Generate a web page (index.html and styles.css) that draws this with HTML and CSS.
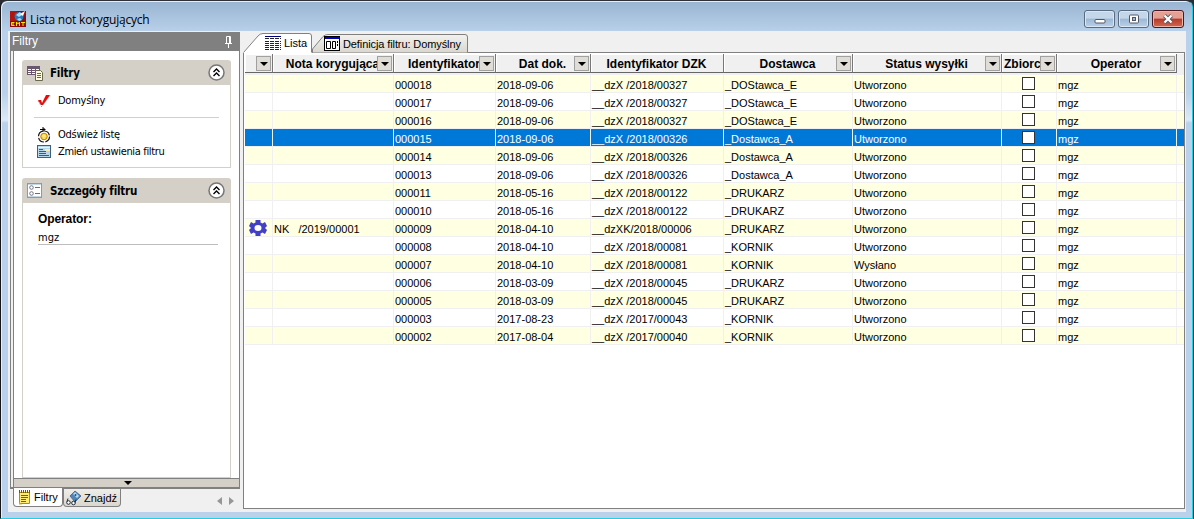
FILE: index.html
```html
<!DOCTYPE html>
<html lang="pl">
<head>
  <meta charset="UTF-8">
  <meta name="viewport" content="width=device-width, initial-scale=1.0">
  <title>Lista not korygujących</title>
  <link rel="stylesheet" href="styles.css">
</head>

<body>
  <div class="window">
    <div class="titlebar">
      <svg class="app-icon" width="16" height="16" viewBox="0 0 16 16">
        <rect width="16" height="16" fill="#8e0d0b"/>
        <path d="M0 0h7L4 6l3 4H0z" fill="#b01510"/>
        <circle cx="9" cy="5.500" r="4.500" fill="#2a7ac0"/>
        <path d="M6 4l4-3 2 3-3 2zM7 8l3-1 2 2-3 1z" fill="#a8dcf0"/>
        <path d="M10 3l5-3-2 5z" fill="#fff"/>
        <path d="M4.500 11.500h-3v3h3M2 13h2M6.500 15v-4l1 1.500h1l1-1.500v4M11 11.500h4M13 11.500v3.500" fill="none" stroke="#ffe800"/>
      </svg>
      <h1>Lista not korygujących</h1>
      <div class="window-buttons">
        <button class="win-btn" aria-label="Minimalizuj">
          <svg width="12" height="12"><rect x="1" y="6.500" width="10" height="3.500" rx="1" fill="#fff" stroke="#535666"/></svg>
        </button>
        <button class="win-btn" aria-label="Maksymalizuj">
          <svg width="12" height="12"><rect x="1.500" y="2" width="9" height="8" rx="1" fill="#fff" stroke="#535666"/><rect x="4.500" y="4.500" width="3" height="3" fill="#9db8d6" stroke="#535666"/></svg>
        </button>
        <button class="win-btn close" aria-label="Zamknij">
          <svg width="12" height="12"><path d="M2.500 2.500l7 7M9.500 2.500l-7 7" stroke="#535666" stroke-width="4"/><path d="M2.500 2.500l7 7M9.500 2.500l-7 7" stroke="#fff" stroke-width="2.300"/></svg>
        </button>
      </div>
    </div>

    <div class="client">
      <!-- Filter panel -->
      <aside class="sidebar">
        <div class="sidebar-header">
          <span>Filtry</span>
          <svg width="9" height="12"><path d="M2.500 7V.5h4V7M5.500 1v6M1 7.500h7M4.500 8v4" fill="none" stroke="#fff"/></svg>
        </div>
        <div class="sidebar-body">
          <div class="groups">
            <section class="group">
              <div class="group-header">
                <svg width="16" height="16"><path d="M0 1h13v9H0z" fill="#6b5670"/><path d="M1 4h3v1H1zM5 4h3v1H5zM9 4h3v1H9zM1 6h3v1H1zM5 6h3v1H5zM1 8h3v1H1zM5 8h3v1H5z" fill="#fff"/><path d="M8.500 5.500h5l2 2v8h-7z" fill="#fffbe0" stroke="#68684c"/><path d="M10 8.500h4M10 10.500h4M10 12.500h4" stroke="#68684c"/></svg>
                <h2>Filtry</h2>
                <svg class="chevron" width="17" height="17"><circle cx="8.500" cy="8.500" r="7.500" fill="#fff" stroke="#777" stroke-width="1.500"/><path d="M5.500 8l3-3 3 3M5.500 12l3-3 3 3" fill="none" stroke="#000" stroke-width="1.400"/></svg>
              </div>
              <div class="group-body links">
                <a class="link"><svg width="14" height="14"><path d="M1 6h3l1 3 4-8h4L6 11H4z" fill="#f00808"/><path d="M1 7l3.500 5.500L13 1.500" fill="none" stroke="#666" stroke-width=".8" stroke-dasharray="1 1"/></svg>Domyślny</a>
                <hr>
                <a class="link"><svg width="14" height="16"><circle cx="7" cy="9.500" r="5.500" fill="#fff" stroke="#111" stroke-width="1.200" stroke-dasharray="7 1.500"/><circle cx="7" cy="9.500" r="3.300" fill="#f8cf35" stroke="#c48200"/><path d="M7 7v5M5 9h4" stroke="#fff4a0"/><path d="M3 2.500h5M6 0v5M7 1v3M8 2v1" fill="none" stroke="#000"/></svg>Odśwież listę</a>
                <a class="link"><svg width="14" height="13"><rect x=".5" y=".5" width="13" height="12" fill="#b9d7ea" stroke="#3b5f86"/><path d="M1 2h12v1H1z" fill="#fff3c0"/><path d="M2 4.500h4M2 6.500h7M2 8.500h7M2 10.500h10" stroke="#27628f"/><path d="M8 4h5v2H8z" fill="#ffecac"/></svg><span class="tight">Zmień ustawienia filtru</span></a>
              </div>
            </section>

            <section class="group details">
              <div class="group-header">
                <svg width="16" height="16"><rect x=".5" y=".5" width="14" height="14" fill="#fff" stroke="#7f9cb8"/><path d="M1 1h13v1H1zM1 13h13v1H1z" fill="#c4d6e4"/><circle cx="4.500" cy="4.500" r="1.800" fill="#fff" stroke="#71738a"/><circle cx="4.500" cy="10.500" r="1.800" fill="#fff" stroke="#71738a"/><path d="M8 4.500h5M8 10.500h5" stroke="#4e7394"/></svg>
                <h2>Szczegóły filtru</h2>
                <svg class="chevron" width="17" height="17"><circle cx="8.500" cy="8.500" r="7.500" fill="#fff" stroke="#777" stroke-width="1.500"/><path d="M5.500 8l3-3 3 3M5.500 12l3-3 3 3" fill="none" stroke="#000" stroke-width="1.400"/></svg>
              </div>
              <div class="group-body fields">
                <h3>Operator:</h3>
                <p>mgz</p>
              </div>
            </section>
          </div>
          <div class="scroll-down"><svg width="8" height="4"><path d="M0 0h8L4 4z"/></svg></div>
        </div>
        <div class="sidebar-tabs">
          <span class="side-tab active"><svg width="13" height="16"><path d="M1.500 3.500h10v11h-10z" fill="#ffec70" stroke="#a88a22"/><path d="M1 13l3 2.500H1z" fill="#d6ad18"/><path d="M3 6.500h7M3 8.500h7M3 10.500h5M3 12.500h5" stroke="#696230"/><path d="M1.500 1v3M3.500 1v3M5.500 1v3M7.500 1v3M9.500 1v3M11.500 1v3" stroke="#555"/></svg>Filtry</span>
          <span class="side-tab"><svg width="16" height="16"><path d="M4 6l5-5 6 5-6 6z" fill="#4c86bd" stroke="#42617e" stroke-width=".8"/><path d="M7 4l2-2 4 4-2 2z" fill="#b8d8ee"/><circle cx="9.500" cy="5" r="1" fill="#155087"/><circle cx="2.500" cy="12.500" r="1.800" fill="#fff" stroke="#222b38"/><circle cx="7.500" cy="13" r="1.800" fill="#fff" stroke="#222b38"/><path d="M1 11.500l1-3M9 12.500l1-3" stroke="#222b38"/></svg>Znajdź</span>
          <span class="tab-arrows">
            <svg width="5" height="8"><path d="M5 0v8L0 4z"/></svg>
            <svg width="5" height="8"><path d="M0 0v8l5-4z"/></svg>
          </span>
        </div>
      </aside>

      <!-- Document list -->
      <main class="main">
        <div class="tabs">
          <div class="tab tab-list">
            <svg class="tab-shape" width="70" height="20"><path d="M0 20V19L15 3q2-2.500 5-2.500h46q2.500 0 2.500 2.500v17z" fill="#fff"/><path d="M.5 19.500 15 3q2-2.500 5-2.500h46q2.500 0 2.500 2.500v16" fill="none" stroke="#808080"/></svg>
            <svg width="16" height="14"><path d="M0 .5h16" stroke="#00007c"/><path d="M0 2.500h16M0 5.500h16M0 7.500h16M0 9.500h16M0 11.500h16M0 13.500h16" stroke="#222" stroke-dasharray="4 1"/></svg>
            <span>Lista</span>
          </div>
          <div class="tab tab-filter">
            <svg class="tab-shape" width="157" height="19"><defs><linearGradient id="tabFill" x1="0" y1="0" x2="0" y2="1"><stop offset="0" stop-color="#f3f2ef"/><stop offset="1" stop-color="#dad7cf"/></linearGradient></defs><path d="M.5 18.500V15L11 2.500Q13 .5 16 .5h137q2.500 0 2.500 2.500v15.500" fill="url(#tabFill)" stroke="#808080"/></svg>
            <svg width="16" height="15"><rect x=".5" y=".5" width="15" height="14" fill="#fff" stroke="#000"/><path d="M1 1h14v2H1z" fill="#0000c8"/><path d="M2.500 5.500h4v7h-4zM8.500 5.500h3v7h-3zM13.500 5v2M13.500 8v2" fill="none" stroke="#000"/></svg>
            <span>Definicja filtru: Domyślny</span>
          </div>
        </div>

        <div class="grid">
          <table>
            <colgroup>
              <col class="c-icon"><col class="c-nota"><col class="c-id"><col class="c-date"><col class="c-dzk"><col class="c-dost"><col class="c-status"><col class="c-zbior"><col class="c-oper"><col class="c-rest">
            </colgroup>
            <thead>
              <tr>
                <th><div><i></i></div></th>
                <th><div><span>Nota korygująca</span><i></i></div></th>
                <th><div><span>Identyfikator</span><i></i></div></th>
                <th><div><span>Dat dok.</span><i></i></div></th>
                <th><div><span>Identyfikator DZK</span></div></th>
                <th><div><span>Dostawca</span><i></i></div></th>
                <th><div><span>Status wysyłki</span><i></i></div></th>
                <th><div><span class="left">Zbiorc</span><i></i></div></th>
                <th><div><span>Operator</span><i></i></div></th>
                <th></th>
              </tr>
            </thead>
            <tbody>
              <tr><td></td><td></td><td>000018</td><td>2018-09-06</td><td>__dzX /2018/00327</td><td>_DOStawca_E</td><td>Utworzono</td><td><b></b></td><td>mgz</td><td></td></tr>
              <tr><td></td><td></td><td>000017</td><td>2018-09-06</td><td>__dzX /2018/00327</td><td>_DOStawca_E</td><td>Utworzono</td><td><b></b></td><td>mgz</td><td></td></tr>
              <tr><td></td><td></td><td>000016</td><td>2018-09-06</td><td>__dzX /2018/00327</td><td>_DOStawca_E</td><td>Utworzono</td><td><b></b></td><td>mgz</td><td></td></tr>
              <tr class="selected"><td></td><td></td><td>000015</td><td>2018-09-06</td><td>__dzX /2018/00326</td><td>_Dostawca_A</td><td>Utworzono</td><td><b></b></td><td>mgz</td><td></td></tr>
              <tr><td></td><td></td><td>000014</td><td>2018-09-06</td><td>__dzX /2018/00326</td><td>_Dostawca_A</td><td>Utworzono</td><td><b></b></td><td>mgz</td><td></td></tr>
              <tr><td></td><td></td><td>000013</td><td>2018-09-06</td><td>__dzX /2018/00326</td><td>_Dostawca_A</td><td>Utworzono</td><td><b></b></td><td>mgz</td><td></td></tr>
              <tr><td></td><td></td><td>000011</td><td>2018-05-16</td><td>__dzX /2018/00122</td><td>_DRUKARZ</td><td>Utworzono</td><td><b></b></td><td>mgz</td><td></td></tr>
              <tr><td></td><td></td><td>000010</td><td>2018-05-16</td><td>__dzX /2018/00122</td><td>_DRUKARZ</td><td>Utworzono</td><td><b></b></td><td>mgz</td><td></td></tr>
              <tr><td class="gear"><svg width="18" height="16" viewBox="0 0 18 16"><path d="M6.500 0h5v2.500l2 1L16 2l2 4-2 2 2 2-2 4-2.500-1.500-2 1V16h-5v-2.500l-2-1L2 14l-2-4 2-2-2-2 2-4 2.500 1.500 2-1z" fill="#4240c4"/><ellipse cx="9" cy="8" rx="3.500" ry="3" fill="#fff"/></svg></td><td>NK&nbsp;&nbsp; /2019/00001</td><td>000009</td><td>2018-04-10</td><td>__dzXK/2018/00006</td><td>_DRUKARZ</td><td>Utworzono</td><td><b></b></td><td>mgz</td><td></td></tr>
              <tr><td></td><td></td><td>000008</td><td>2018-04-10</td><td>__dzX /2018/00081</td><td>_KORNIK</td><td>Utworzono</td><td><b></b></td><td>mgz</td><td></td></tr>
              <tr><td></td><td></td><td>000007</td><td>2018-04-10</td><td>__dzX /2018/00081</td><td>_KORNIK</td><td>Wysłano</td><td><b></b></td><td>mgz</td><td></td></tr>
              <tr><td></td><td></td><td>000006</td><td>2018-03-09</td><td>__dzX /2018/00045</td><td>_DRUKARZ</td><td>Utworzono</td><td><b></b></td><td>mgz</td><td></td></tr>
              <tr><td></td><td></td><td>000005</td><td>2018-03-09</td><td>__dzX /2018/00045</td><td>_DRUKARZ</td><td>Utworzono</td><td><b></b></td><td>mgz</td><td></td></tr>
              <tr><td></td><td></td><td>000003</td><td>2017-08-23</td><td>__dzX /2017/00043</td><td>_KORNIK</td><td>Utworzono</td><td><b></b></td><td>mgz</td><td></td></tr>
              <tr><td></td><td></td><td>000002</td><td>2017-08-04</td><td>__dzX /2017/00040</td><td>_KORNIK</td><td>Utworzono</td><td><b></b></td><td>mgz</td><td></td></tr>
            </tbody>
          </table>
        </div>
      </main>
    </div>
  </div>
</body>
</html>
```
FILE: styles.css
```css
* {
  box-sizing: border-box;
}

body {
  margin: 0;
  background: #2b2b33;
  font-family: "Liberation Sans", Arial, sans-serif;
  font-size: 11px;
  color: #000;
  overflow: hidden;
}

svg {
  display: block;
  flex: none;
}

h1, h2, h3, p {
  margin: 0;
}

/* Window frame */
.window {
  height: 519px;
  margin-right: 1px;
  padding: 0 6px 6px 7px;
  display: flex;
  flex-direction: column;
  background: linear-gradient(#99b4d1, #b9d1ea 31px, #b9d1ea 92px, #dce9f7 119px, #b9d1ea 122px);
  border: 1px solid #26cfe0;
  border-top-color: #303038;
  border-left-color: #15151a;
  border-radius: 7px 7px 0 0;
  box-shadow: inset 1px 1px #e4eff9;
}

.titlebar {
  height: 30px;
  flex: none;
  display: flex;
  align-items: flex-start;
  padding: 10px 2px 0;
}

.titlebar h1 {
  margin: 1px 0 0 4px;
  font: 12px/16px "Open Sans", sans-serif;
  letter-spacing: -0.2px;
}

.window-buttons {
  display: flex;
  gap: 3px;
  margin: -1px 0 0 auto;
}

.win-btn {
  width: 31px;
  height: 18px;
  padding: 0;
  display: flex;
  align-items: center;
  justify-content: center;
  border: 1px solid #5a6b80;
  border-radius: 3px;
  background: linear-gradient(#c3d6ea 45%, #9db7d4 50%, #b9d1ea);
  box-shadow: inset 0 0 0 1px #d9e7f5;
}

.win-btn.close {
  width: 32px;
  border-color: #4a1620;
  background: linear-gradient(#e3a093 45%, #b8392a 50%, #cf6a52);
  box-shadow: inset 0 0 0 1px #eab6aa;
}

.client {
  flex: 1;
  min-height: 0;
  display: flex;
  background: #f0f0f0;
}

/* Sidebar */
.sidebar {
  width: 232px;
  padding: 1px 0 0 2px;
  display: flex;
  flex-direction: column;
}

.sidebar-header {
  height: 19px;
  flex: none;
  display: flex;
  justify-content: space-between;
  padding: 4px 7px 0 2px;
  background: #808080;
  color: #fff;
  font-size: 12px;
  line-height: 11px;
}

.sidebar-body {
  height: 438px;
  flex: none;
  display: flex;
  flex-direction: column;
  padding-left: 2px;
  border-left: 1px solid #808080;
  border-bottom: 2px solid #808080;
}

.groups {
  flex: 1;
  min-height: 0;
  padding: 9px 8px 0;
  display: flex;
  flex-direction: column;
  gap: 10px;
  background: #fff;
  border: 1px solid #808080;
  border-top: 0;
}

.group {
  font-family: "DejaVu Sans Condensed", "DejaVu Sans", sans-serif;
  font-size: 11px;
}

.group.details {
  flex: 1;
  display: flex;
  flex-direction: column;
}

.group-header {
  height: 25px;
  flex: none;
  display: flex;
  align-items: center;
  padding: 0 6px 0 5px;
  background: #d4d0c8;
  border-radius: 3px 3px 0 0;
}

.group-header h2 {
  margin-left: 7px;
  font-size: 11.5px;
  letter-spacing: -0.2px;
}

.chevron {
  margin-left: auto;
}

.group-body {
  border: 1px solid #d4d0c8;
  border-top: 0;
}

.links {
  height: 83px;
  padding: 7px 11px 0 14px;
}

.link {
  display: flex;
  align-items: center;
  gap: 7px;
  height: 17px;
  letter-spacing: -0.25px;
}

.tight {
  letter-spacing: -0.35px;
}

.links hr {
  height: 1px;
  margin: 8px 0 8px -3px;
  border: 0;
  background: #d4d0c8;
}

.fields {
  flex: 1;
  padding: 9px 12px 0 15px;
}

.fields h3 {
  font: bold 12px/14px "Liberation Sans", Arial, sans-serif;
  letter-spacing: -0.1px;
}

.fields p {
  height: 19px;
  border-bottom: 1px solid #bdbdbd;
  line-height: 23px;
}

.scroll-down {
  height: 8px;
  flex: none;
  padding: 2px 0 0 2px;
  display: flex;
  justify-content: center;
  background: #d4d0c8;
  border: 1px solid #808080;
  border-width: 0 1px;
}

.sidebar-tabs {
  display: flex;
  padding-left: 3px;
}

.side-tab {
  width: 58px;
  height: 18px;
  display: flex;
  align-items: center;
  gap: 2px;
  padding: 0 2px;
  border: 1px solid #808080;
  border-top: 0;
  border-radius: 0 0 4px 4px;
  background: linear-gradient(#efede9, #dad7cf);
}

.side-tab.active {
  width: 50px;
  height: 19px;
  margin-top: -1px;
  padding-left: 4px;
  gap: 3px;
  background: #fff;
}

.tab-arrows {
  display: flex;
  gap: 7px;
  margin: 8px 6px 0 auto;
  fill: #969696;
}

/* Main list */
.main {
  flex: 1;
  min-width: 0;
  display: flex;
  flex-direction: column;
  padding: 3px 1px 3px 3px;
}

.tabs {
  height: 18px;
  flex: none;
  display: flex;
  align-items: flex-end;
}

.tab {
  position: relative;
  display: flex;
  align-items: center;
  gap: 3px;
}

.tab > * {
  position: relative;
}

/* slanted outline drawn behind the label */
.tab .tab-shape {
  position: absolute;
  left: 0;
  bottom: -1px;
}

.tab-list {
  width: 69px;
  height: 18px;
  padding-left: 22px;
  z-index: 1;
}

.tab-filter {
  width: 157px;
  height: 17px;
  padding-left: 12px;
  letter-spacing: -0.1px;
}

.grid {
  flex: 1;
  min-height: 0;
  padding: 1px 0 0 1px;
  border: 1px solid #808080;
  background: #fff;
}

table {
  width: 939px;
  table-layout: fixed;
  border-collapse: separate;
  border-spacing: 0;
}

.c-icon { width: 28px; }
.c-nota { width: 121px; }
.c-id { width: 102px; }
.c-date { width: 95px; }
.c-dzk { width: 133px; }
.c-dost { width: 129px; }
.c-status { width: 149px; }
.c-zbior { width: 55px; }
.c-oper { width: 120px; }
.c-rest { width: 7px; }

th {
  height: 21px;
  padding: 0 0 2px;
  background: #f0f0f0;
}

th div {
  height: 19px;
  display: flex;
  align-items: center;
  padding: 1px 1px 0 0;
  overflow: hidden;
  border-right: 1px solid #777;
  border-bottom: 1px solid #666;
  box-shadow: inset 1px 1px #fff;
}

th span {
  flex: 1;
  min-width: 0;
  display: flex;
  justify-content: center;
  overflow: hidden;
  white-space: nowrap;
  font-size: 12px;
  line-height: 16px;
}

th span.left {
  justify-content: flex-start;
  padding-left: 2px;
}

/* drop-down button sits on top of the caption */
th i {
  position: relative;
  width: 15px;
  height: 15px;
  flex: none;
  margin-left: auto;
  display: flex;
  align-items: center;
  justify-content: center;
  border: 1px solid #a0a0a0;
  background: #e0ddd6;
}

th span + i {
  margin-left: -15px;
}

th i::before {
  content: "";
  border: solid transparent;
  border-width: 4px 4px 0;
  border-top-color: #000;
}

td {
  height: 18px;
  padding: 3px 0 0 1px;
  border-right: 1px solid #f0f0f0;
  border-bottom: 1px solid #f0f0f0;
  line-height: 14px;
  white-space: pre;
  overflow: hidden;
}

td:last-child {
  border-right: 0;
}

tbody tr:nth-child(odd) td {
  background: #ffffe1;
}

tbody tr.selected td {
  background: #0078d7;
  color: #fff;
}

td b {
  display: block;
  width: 13px;
  height: 13px;
  margin: -3px 0 0 19px;
  border: 1px solid #333;
  background: #fff;
}

td.gear {
  padding: 0 0 0 4px;
}
```
